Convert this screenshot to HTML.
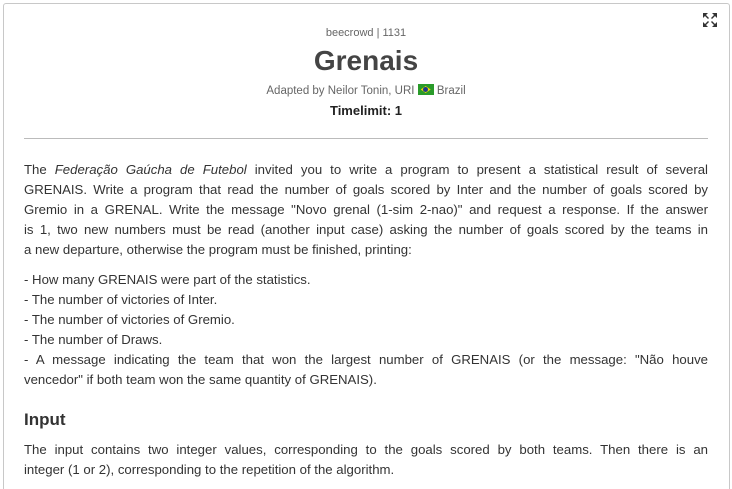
<!DOCTYPE html>
<html><head><meta charset="utf-8"><style>
*{margin:0;padding:0;box-sizing:border-box}
html,body{width:732px;height:489px;overflow:hidden}
body{background:#fff;font-family:"Liberation Sans",sans-serif;color:#333;position:relative}
.box{position:absolute;left:3px;top:3px;width:727px;height:486px;border:1px solid #c8c8c8;border-bottom:none;border-radius:3px 3px 0 0}
.c{position:absolute;left:0;width:732px;text-align:center}
.p{position:absolute;left:24px;width:684px;font-size:13.2px;line-height:20px;color:#333}
.l{text-align:justify;text-align-last:justify}
</style></head><body>
<div class="box"></div>
<svg style="position:absolute;left:702px;top:12px" width="16" height="16" viewBox="0 0 16 16" fill="#333"><path d="M1 1h5l-2 2 3 3-1 1-3-3-2 2z M15 1v5l-2-2-3 3-1-1 3-3-2-2z M1 15v-5l2 2 3-3 1 1-3 3 2 2z M15 15h-5l2-2-3-3 1-1 3 3 2-2z"/></svg>
<div class="c" style="top:27px;font-size:11px;color:#666">beecrowd | 1131</div>
<div class="c" style="top:45px;font-size:28px;font-weight:bold;color:#444">Grenais</div>
<div class="c" style="top:84px;font-size:11.5px;color:#666">Adapted by Neilor Tonin, URI <span style="display:inline-block;width:16px;height:11px;background:#2a9b2a;vertical-align:-1px;position:relative"><span style="position:absolute;left:3px;top:2px;width:10px;height:7px;background:#f5d800;clip-path:polygon(50% 0,100% 50%,50% 100%,0 50%)"></span><span style="position:absolute;left:5.5px;top:3px;width:5px;height:5px;border-radius:50%;background:#1b3c8c"></span></span> Brazil</div>
<div class="c" style="top:103px;font-size:13px;font-weight:bold;color:#222">Timelimit: 1</div>
<div style="position:absolute;left:24px;top:138px;width:684px;height:1px;background:#bbb"></div>
<div class="p" style="top:160px">
<div class="l">The <i>Federação Gaúcha de Futebol</i> invited you to write a program to present a statistical result of several</div>
<div class="l">GRENAIS. Write a program that read the number of goals scored by Inter and the number of goals scored by</div>
<div class="l">Gremio in a GRENAL. Write the message "Novo grenal (1-sim 2-nao)" and request a response. If the answer</div>
<div class="l">is 1, two new numbers must be read (another input case) asking the number of goals scored by the teams in</div>
<div>a new departure, otherwise the program must be finished, printing:</div>
</div>
<div class="p" style="top:270px">
<div>- How many GRENAIS were part of the statistics.</div>
<div>- The number of victories of Inter.</div>
<div>- The number of victories of Gremio.</div>
<div>- The number of Draws.</div>
<div class="l">- A message indicating the team that won the largest number of GRENAIS (or the message: "Não houve</div>
<div>vencedor" if both team won the same quantity of GRENAIS).</div>
</div>
<div class="p" style="top:409px;font-size:17px;font-weight:bold;line-height:22px;color:#333">Input</div>
<div class="p" style="top:440px">
<div class="l">The input contains two integer values, corresponding to the goals scored by both teams. Then there is an</div>
<div>integer (1 or 2), corresponding to the repetition of the algorithm.</div>
</div>
</body></html>
